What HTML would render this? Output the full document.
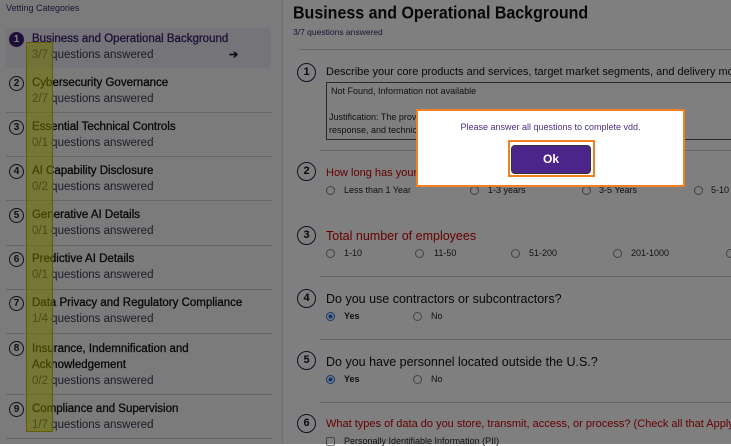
<!DOCTYPE html>
<html><head><meta charset="utf-8"><style>
*{margin:0;padding:0;box-sizing:border-box}
body{width:731px;height:444px;overflow:hidden;background:#fff;font-family:"Liberation Sans",Arial,sans-serif;position:relative;color:#1a1a2e}
.a{position:absolute;white-space:nowrap}
.side{position:absolute;left:0;top:0;width:283px;height:444px;background:#f6f6f6;border-right:1px solid #ddd}
.c{position:absolute;width:15px;height:15px;border:1.3px solid #222;border-radius:50%;font-size:10px;font-weight:bold;text-align:center;line-height:13px;color:#222}
.t{position:absolute;left:32px;font-size:11.5px;color:#111;-webkit-text-stroke:0.3px #111}
.s{position:absolute;left:32px;font-size:11.5px;color:#333a4a}
.hr{position:absolute;left:6px;width:266px;height:1px;background:#ccc}
.qc{position:absolute;left:297px;width:19px;height:19px;border:1.5px solid #2a1b4e;border-radius:50%;font-size:11px;font-weight:bold;text-align:center;line-height:16px;color:#111}
.q{position:absolute;left:326px;font-size:12.5px;color:#111;white-space:nowrap}
.red{color:#c00}
.o{position:absolute;font-size:9px;color:#222;white-space:nowrap}
.r{position:absolute;width:9px;height:9px;border:1px solid #888;border-radius:50%}
.rs{border-color:#1a6fd8;background:radial-gradient(#1a6fd8 40%,#fff 45%)}
.mhr{position:absolute;left:320px;width:411px;height:1px;background:#ccc}
.ov{position:absolute;left:0;top:0;width:731px;height:444px;background:rgba(0,0,0,0.5)}
</style></head><body>
<div class="side"></div>
<div class="a" style="left:6px;top:3px;font-size:9px;color:#3a2a6e">Vetting Categories</div>
<div class="a" style="left:6px;top:28px;width:265px;height:40px;background:#e9e9f3;border-radius:4px"></div>
<div class="c" style="left:9px;top:32px;background:#3b1f6e;border-color:#3b1f6e;color:#fff">1</div>
<div class="t" style="top:33px;color:#3b1f6e;-webkit-text-stroke:0.3px #3b1f6e">Business and Operational Background</div>
<div class="s" style="top:49px">3/7 questions answered</div>
<div class="a" style="left:229px;top:48px;font-size:11px;font-weight:bold">➔</div>
<div class="c" style="left:9px;top:76px">2</div><div class="t" style="top:77px">Cybersecurity Governance</div><div class="s" style="top:93px">2/7 questions answered</div>
<div class="hr" style="top:112px"></div>
<div class="c" style="left:9px;top:120px">3</div><div class="t" style="top:121px">Essential Technical Controls</div><div class="s" style="top:137px">0/1 questions answered</div>
<div class="hr" style="top:156px"></div>
<div class="c" style="left:9px;top:164px">4</div><div class="t" style="top:165px">AI Capability Disclosure</div><div class="s" style="top:181px">0/2 questions answered</div>
<div class="hr" style="top:200px"></div>
<div class="c" style="left:9px;top:208px">5</div><div class="t" style="top:209px">Generative AI Details</div><div class="s" style="top:225px">0/1 questions answered</div>
<div class="hr" style="top:245px"></div>
<div class="c" style="left:9px;top:252px">6</div><div class="t" style="top:253px">Predictive AI Details</div><div class="s" style="top:269px">0/1 questions answered</div>
<div class="hr" style="top:289px"></div>
<div class="c" style="left:9px;top:296px">7</div><div class="t" style="top:297px">Data Privacy and Regulatory Compliance</div><div class="s" style="top:313px">1/4 questions answered</div>
<div class="hr" style="top:333px"></div>
<div class="c" style="left:9px;top:341px">8</div><div class="t" style="top:343px">Insurance, Indemnification and</div><div class="t" style="top:359px">Acknowledgement</div><div class="s" style="top:375px">0/2 questions answered</div>
<div class="hr" style="top:394px"></div>
<div class="c" style="left:9px;top:402px">9</div><div class="t" style="top:403px">Compliance and Supervision</div><div class="s" style="top:419px">1/7 questions answered</div>
<div class="hr" style="top:438px"></div>
<div class="a" style="left:26px;top:42px;width:27px;height:390px;background:rgba(230,230,0,0.55);border:1px solid #c8b800"></div>

<div class="a" style="left:293px;top:4px;font-size:16px;font-weight:bold;color:#111;transform:scaleY(1.1);transform-origin:0 0">Business and Operational Background</div>
<div class="a" style="left:293px;top:27px;font-size:8.5px;color:#3b1f6e">3/7 questions answered</div>
<div class="mhr" style="top:49px;left:300px;width:431px"></div>

<div class="qc" style="top:63px">1</div>
<div class="q" style="top:66px;font-size:11px">Describe your core products and services, target market segments, and delivery models.</div>
<div class="a" style="left:326px;top:82px;width:420px;height:58px;border:1px solid #555"></div>
<div class="o" style="left:331px;top:86px">Not Found, Information not available</div>
<div class="o" style="left:329px;top:112px">Justification: The provided documentation focuses security practices, incident</div>
<div class="o" style="left:329px;top:125px">response, and technical controls and does not describe the products, services</div>
<div class="mhr" style="top:150px"></div>

<div class="qc" style="top:162px">2</div>
<div class="q red" style="top:167px;font-size:11px">How long has your company been in business?</div>
<div class="r" style="left:326px;top:186px"></div><div class="o" style="left:344px;top:185px">Less than 1 Year</div>
<div class="r" style="left:470px;top:186px"></div><div class="o" style="left:488px;top:185px">1-3 years</div>
<div class="r" style="left:582px;top:186px"></div><div class="o" style="left:599px;top:185px">3-5 Years</div>
<div class="r" style="left:694px;top:186px"></div><div class="o" style="left:711px;top:185px">5-10</div>

<div class="qc" style="top:226px">3</div>
<div class="q red" style="top:229px">Total number of employees</div>
<div class="r" style="left:326px;top:249px"></div><div class="o" style="left:344px;top:248px">1-10</div>
<div class="r" style="left:415px;top:249px"></div><div class="o" style="left:434px;top:248px">11-50</div>
<div class="r" style="left:511px;top:249px"></div><div class="o" style="left:529px;top:248px">51-200</div>
<div class="r" style="left:613px;top:249px"></div><div class="o" style="left:631px;top:248px">201-1000</div>
<div class="r" style="left:726px;top:249px"></div>
<div class="mhr" style="top:276px"></div>

<div class="qc" style="top:289px">4</div>
<div class="q" style="top:292px">Do you use contractors or subcontractors?</div>
<div class="r rs" style="left:326px;top:312px"></div><div class="o" style="left:344px;top:311px;font-weight:bold">Yes</div>
<div class="r" style="left:413px;top:312px"></div><div class="o" style="left:431px;top:311px">No</div>
<div class="mhr" style="top:339px"></div>

<div class="qc" style="top:351px">5</div>
<div class="q" style="top:355px">Do you have personnel located outside the U.S.?</div>
<div class="r rs" style="left:326px;top:375px"></div><div class="o" style="left:344px;top:374px;font-weight:bold">Yes</div>
<div class="r" style="left:413px;top:375px"></div><div class="o" style="left:431px;top:374px">No</div>
<div class="mhr" style="top:402px"></div>

<div class="qc" style="top:414px">6</div>
<div class="q red" style="top:418px;font-size:11px">What types of data do you store, transmit, access, or process? (Check all that Apply)</div>
<div class="a" style="left:326px;top:437px;width:9px;height:9px;border:1px solid #888;border-radius:2px"></div>
<div class="o" style="left:344px;top:436px">Personally Identifiable Information (PII)</div>

<div class="ov"></div>

<div class="a" style="left:416px;top:109px;width:269px;height:78px;border:2px solid #f08020;background:#fff"></div>
<div class="a" style="left:419px;top:122px;width:263px;text-align:center;font-size:9px;color:#4a2f80">Please answer all questions to complete vdd.</div>
<div class="a" style="left:508px;top:140px;width:87px;height:37px;border:2px solid #f08020"></div>
<div class="a" style="left:511px;top:145px;width:80px;height:29px;background:#4b2589;border:1px solid #333;border-radius:4px;color:#fff;font-weight:bold;font-size:12px;text-align:center;line-height:27px">Ok</div>
</body></html>
